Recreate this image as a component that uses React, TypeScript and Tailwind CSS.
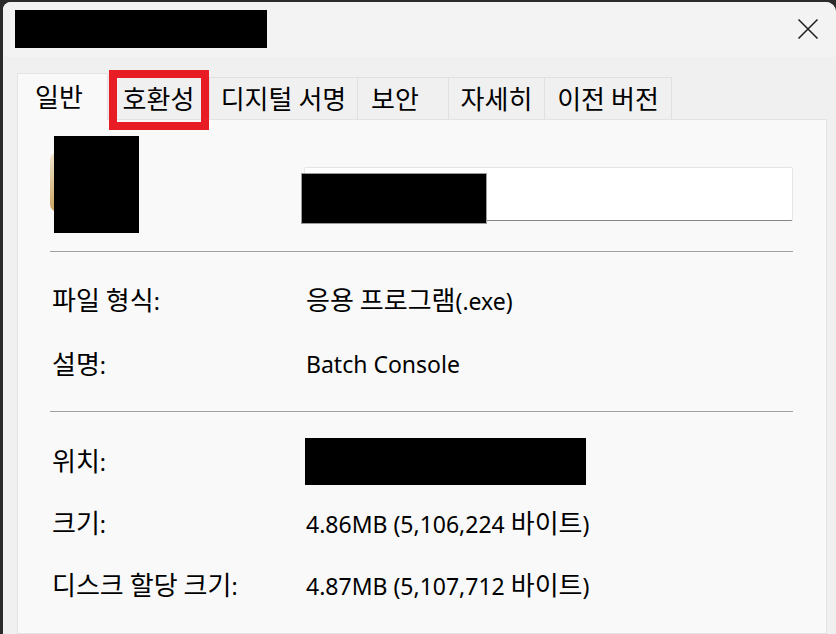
import React from 'react';

// Hangul runs are set a little larger than the Latin text, as Malgun Gothic is in the original
const K: React.FC<{ text: string }> = ({ text }) => (
  <span className="whitespace-pre">
    {text.split(/([\uAC00-\uD7A3]+)/).map((part, i) =>
      /[\uAC00-\uD7A3]/.test(part) ? (
        <span key={i} className="text-[26px]">
          {part}
        </span>
      ) : (
        part
      )
    )}
  </span>
);

// Tabs of the properties dialog; widths/padding measured from the reference
const tabs: { label: string; width: string; pad: string }[] = [
  { label: '호환성', width: 'w-[102px]', pad: 'justify-center' },
  { label: '디지털 서명', width: 'w-[148px]', pad: 'justify-center' },
  { label: '보안', width: 'w-[91px]', pad: 'justify-start pl-[13px]' },
  { label: '자세히', width: 'w-[96px]', pad: 'justify-center' },
  { label: '이전 버전', width: 'w-[127px]', pad: 'justify-center' },
];

const Row: React.FC<{ label: string; h: string; children: React.ReactNode }> = ({ label, h, children }) => (
  <div className={`flex items-center ${h} pl-[34px]`}>
    <div className="w-[254px] shrink-0">
      <K text={label} />
    </div>
    <div className="flex items-center">{children}</div>
  </div>
);

const Divider: React.FC<{ className?: string }> = ({ className = '' }) => (
  <div className={`ml-[32px] w-[743px] h-px bg-[#a0a0a0] ${className}`} />
);

export default function App() {
  return (
    <div
      className="w-[836px] h-[634px] overflow-hidden bg-[#2b2b2b] pt-[2px] pl-[3px] text-black text-[23px] leading-none"
      style={{ fontFamily: '"Noto Sans", "Noto Sans CJK KR", sans-serif' }}
    >
      <div className="h-full bg-[#f0f0f0] rounded-tl-[8px] rounded-tr-[10px] flex flex-col">
        {/* Title bar */}
        <div className="h-[55px] shrink-0 bg-[#f3f3f3] rounded-tl-[8px] rounded-tr-[10px] flex items-center justify-between pl-[12px] pr-[17px] pb-[3px]">
          <div className="w-[252px] h-[38px] bg-black mt-[2px]" />
          <svg width="22" height="22" viewBox="0 0 22 22" className="mt-[1px]">
            <path d="M1.5 1.5 L20.5 20.5 M20.5 1.5 L1.5 20.5" stroke="#1c1c1c" strokeWidth="1.5" />
          </svg>
        </div>

        {/* Tab strip */}
        <div className="relative flex items-end mt-[16px] ml-[14px] h-[46px] shrink-0">
          <div className="relative z-10 -mb-px h-[47px] w-[91px] bg-[#f9f9f9] border border-b-0 border-[#e3e3e3] flex items-center pl-[17px]">
            <K text="일반" />
          </div>
          {tabs.map((t) => (
            <div
              key={t.label}
              className={`h-[42px] ${t.width} flex items-center ${t.pad} border-t border-r border-[#e0e0e0] bg-[#f0f0f0] whitespace-nowrap`}
            >
              <K text={t.label} />
            </div>
          ))}
          {/* Red highlight around the 호환성 tab */}
          <div className="absolute z-20 left-[92px] top-[-3px] w-[100px] h-[60px] border-[8px] border-[#e81c24]" />
        </div>

        {/* Panel */}
        <div className="flex-1 mr-[9px] ml-[14px] bg-[#f9f9f9] border border-[#e3e3e3]">
          {/* Header: icon + name box */}
          <div className="flex pt-[16px] pl-[32px]">
            <div className="relative w-[89px] h-[97px] shrink-0">
              <div className="absolute left-0 top-[16px] w-[80px] h-[60px] rounded-[8px] bg-gradient-to-b from-[#f0e6cf] to-[#c9a35c]" />
              <div className="absolute left-[4px] top-0 w-[85px] h-[97px] bg-black" />
            </div>
            <div className="relative ml-[165px] mt-[31px] w-[489px] h-[54px] bg-white border border-[#e5e5e5] border-b-[#868686] rounded-[2px]">
              <div className="absolute left-[-4px] top-[5px] w-[186px] h-[51px] bg-black border border-[#9a9a9a]" />
            </div>
          </div>

          <Divider className="mt-[18px]" />

          <div className="mt-[16px]">
            <Row label="파일 형식:" h="h-[64px]">
              <K text="응용 프로그램(.exe)" />
            </Row>
            <Row label="설명:" h="h-[64px]">Batch Console</Row>
          </div>

          <Divider className="mt-[15px]" />

          <div className="mt-[18px]">
            <Row label="위치:" h="h-[62px]">
              <div className="-ml-px w-[281px] h-[47px] bg-black" />
            </Row>
            <Row label="크기:" h="h-[62px]">
              <K text="4.86MB (5,106,224 바이트)" />
            </Row>
            <Row label="디스크 할당 크기:" h="h-[62px]">
              <K text="4.87MB (5,107,712 바이트)" />
            </Row>
          </div>
        </div>
      </div>
    </div>
  );
}
